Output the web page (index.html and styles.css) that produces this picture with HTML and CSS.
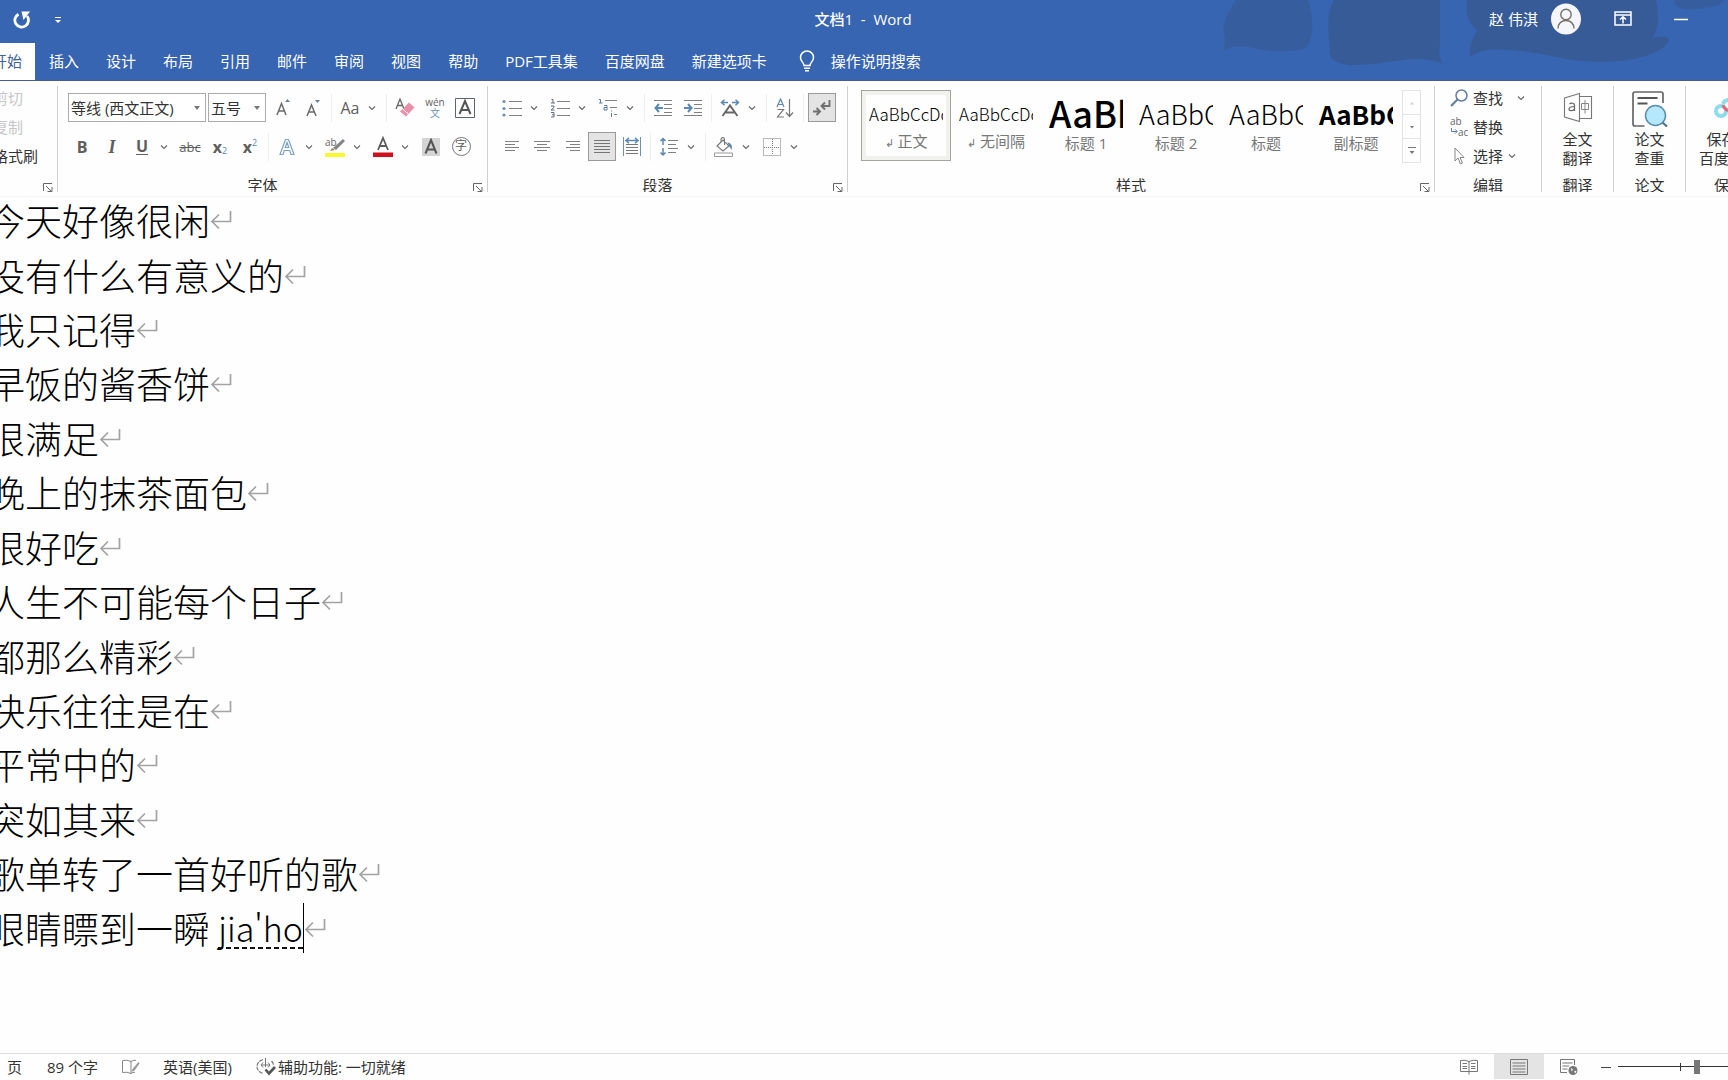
FILE: index.html
```html
<!DOCTYPE html>
<html lang="zh-CN">
<head>
<meta charset="utf-8">
<meta name="viewport" content="width=device-width, initial-scale=1">
<title>文档1 - Word</title>
<link rel="stylesheet" href="styles.css">
</head>
<body>
<svg class="defs" aria-hidden="true">
  <symbol id="chev" viewBox="0 0 8 8"><path d="M1 2.5 4 5.5 7 2.5" fill="none" stroke="#666" stroke-width="1.1"/></symbol>
  <symbol id="ret" viewBox="0 0 22 20"><path d="M20.5 1v10.500H2M9 4.500 2 11.500l7 7" fill="none" stroke="#a3a3a3" stroke-width="1.700"/></symbol>
  <symbol id="launch" viewBox="0 0 10 9"><path d="M.5 8V.5H9M3 3l5 5M9 4v4.500H4.500" fill="none" stroke="#666"/></symbol>
</svg>
<div class="app">
  <header class="head">
    <svg class="clouds" viewBox="0 0 510 70" aria-hidden="true">
      <g fill="#365b97">
        <path opacity=".7" d="M18 0C8 14 4 26 6 34c2 6 0 10 0 17 8-7 22-5 34-2 18 4 34 3 48-1 8-8 8-30 2-48z"/>
        <path d="M116 0c-8 12-6 30-4 50-3 5 4 14 20 15 22 1 46-6 66-6 12 0 18 2 26 4-4-8-2-16-2-24V0z"/>
        <path d="M249 0c-2 14 2 24 10 30-2 6-8 12-7 27 10-8 26-8 40-7 34 2 56 12 90 12 26 0 60-6 68-20 4-6-6-6-16-4 8-10 6-24 4-38z"/>
        <path opacity=".7" d="M456 0c0 8 8 10 20 9 10-1 26-1 30-9z"/>
      </g>
    </svg>
    <div class="titlebar">
      <div class="quick">
        <button class="bare" aria-label="重复"><svg width="18" height="18" viewBox="0 0 18 18"><path d="M5.500 3.200A6.800 6.800 0 1 0 14 5" fill="none" stroke="#fff" stroke-width="2.800"/><path d="M8.500.5h8.500l-6.500 8.500z" fill="#fff"/></svg></button>
        <button class="bare" aria-label="自定义快速访问工具栏"><svg width="8" height="8" viewBox="0 0 8 8"><path d="M1 1.500h6" stroke="#fff"/><path d="M1 4h6L4 7z" fill="#fff"/></svg></button>
      </div>
      <h1 class="title">文档1&nbsp; -&nbsp; Word</h1>
      <div class="account">
        <span class="user">赵 伟淇</span>
        <button class="bare avatar" aria-label="账户"><svg width="30" height="32" viewBox="0 0 30 32"><ellipse cx="15" cy="16" rx="15" ry="15.500" fill="#f4f6fb"/><circle cx="15" cy="11.500" r="5.200" fill="none" stroke="#776f6a" stroke-width="1.400"/><path d="M7 25.500c0-5 3.500-8 8-8s8 3 8 8" fill="none" stroke="#776f6a" stroke-width="1.400"/></svg></button>
        <button class="bare display" aria-label="功能区显示选项"><svg width="18" height="15" viewBox="0 0 18 15"><path d="M1 1h16v13H1zM1 4h16M9 12.500V6M6 8.500 9 5.800l3 2.700" fill="none" stroke="#fff" stroke-width="1.500"/></svg></button>
        <button class="bare" aria-label="最小化"><svg width="14" height="14" viewBox="0 0 14 14"><path d="M0 7.500h14" stroke="#fff" stroke-width="1.500"/></svg></button>
      </div>
    </div>
    <nav class="tabs">
      <button class="tab active">开始</button><button class="tab">插入</button><button class="tab">设计</button><button class="tab">布局</button><button class="tab">引用</button><button class="tab">邮件</button><button class="tab">审阅</button><button class="tab">视图</button><button class="tab">帮助</button><button class="tab">PDF工具集</button><button class="tab">百度网盘</button><button class="tab">新建选项卡</button>
      <label class="tell"><svg width="16" height="22" viewBox="0 0 16 22"><path d="M5 15.500c0-3-3.500-4-3.500-8a6.500 6.500 0 0 1 13 0c0 4-3.500 5-3.500 8zM5 18.200h6M6 20.800h4" fill="none" stroke="#fff" stroke-width="1.500"/></svg><input type="text" placeholder="操作说明搜索" aria-label="操作说明搜索"></label>
    </nav>
  </header>

  <section class="ribbon" aria-label="开始">
    <div class="group clip">
      <div class="body list">
        <button class="cmd off">剪切</button><button class="cmd off">复制</button><button class="cmd">格式刷</button>
      </div>
      <div class="foot"><button class="launch" aria-label="剪贴板设置"><svg width="10" height="9"><use href="#launch"/></svg></button></div>
    </div>

    <div class="group font">
      <div class="body">
        <div class="row">
          <span class="combo name"><select aria-label="字体"><option>等线 (西文正文)</option></select><svg width="6" height="4" viewBox="0 0 6 4"><path d="M0 0h6L3 4z" fill="#777"/></svg></span>
          <span class="combo size"><select aria-label="字号"><option>五号</option></select><svg width="6" height="4" viewBox="0 0 6 4"><path d="M0 0h6L3 4z" fill="#777"/></svg></span>
          <button class="tool" aria-label="增大字号"><svg width="16" height="18" viewBox="0 0 16 18"><path d="M2 16 6.500 4.500 11 16M3.500 12h6" fill="none" stroke="#6b6b6b" stroke-width="1.500"/><path d="M10 3h5l-2.500-3z" fill="#6b7f94"/></svg></button>
          <button class="tool" aria-label="减小字号"><svg width="16" height="18" viewBox="0 0 16 18"><path d="M2 17 6.500 6 11 17M3.500 13h6" fill="none" stroke="#6b6b6b" stroke-width="1.500"/><path d="M10 1h5l-2.500 3z" fill="#6b7f94"/></svg></button>
          <i class="sep"></i>
          <button class="tool split" aria-label="更改大小写"><span class="glyph">Aa</span><svg class="chev"><use href="#chev"/></svg></button>
          <i class="sep"></i>
          <button class="tool" aria-label="清除格式"><svg width="20" height="20" viewBox="0 0 20 20"><path d="M1 11 5 1l4 10M2.500 7.500h5" fill="none" stroke="#666" stroke-width="1.300"/><path d="m14 4.500 5.500 5-8.500 9-6-5z" fill="#ea8fab"/><path d="m7.500 11 6 5" stroke="#fff"/></svg></button>
          <button class="tool pinyin" aria-label="拼音指南"><span>wén</span><b>文</b></button>
          <button class="tool" aria-label="字符边框"><svg width="20" height="20" viewBox="0 0 20 20"><path d="M.5.500h19v19H.5z" fill="none" stroke="#5b6570"/><path d="M4.500 16 10 3l5.500 13M6.500 12h7" fill="none" stroke="#555" stroke-width="2"/></svg></button>
        </div>
        <div class="row">
          <button class="tool"><b class="glyph strong">B</b></button>
          <button class="tool"><em class="glyph ital">I</em></button>
          <button class="tool split"><span class="glyph strong under">U</span><svg class="chev"><use href="#chev"/></svg></button>
          <button class="tool"><s class="strike">abc</s></button>
          <button class="tool"><span class="glyph script">x<sub>2</sub></span></button>
          <button class="tool"><span class="glyph script">x<sup>2</sup></span></button>
          <i class="sep"></i>
          <button class="tool split" aria-label="文本效果"><svg width="16" height="18" viewBox="0 0 16 18"><path d="M1 16.500 6.500 1.500h3L15 16.500h-3l-1.300-4H5.300l-1.300 4zM6.200 9.500h3.600L8 4.500z" fill="#fff" stroke="#7ba3c4" stroke-width="1.200"/></svg><svg class="chev"><use href="#chev"/></svg></button>
          <button class="tool split" aria-label="突出显示"><svg width="22" height="22" viewBox="0 0 22 22"><path d="M1 17h20v4H1z" fill="#fff82b"/><text x="1" y="10" class="mini">ab</text><path d="m19 3 2 2-9 9-3-2z" fill="#858585"/><path d="m8 12 3 2-5 1z" fill="#a5854a"/></svg><svg class="chev"><use href="#chev"/></svg></button>
          <button class="tool split" aria-label="字体颜色"><svg width="20" height="22" viewBox="0 0 20 22"><path d="M5 14 10 2l5 12M6.800 10h6.400" fill="none" stroke="#5c5c5c" stroke-width="1.800"/><path d="M0 16.500h20v4.500H0z" fill="#d0101c"/></svg><svg class="chev"><use href="#chev"/></svg></button>
          <button class="tool" aria-label="字符底纹"><svg width="18" height="18" viewBox="0 0 18 18"><path d="M0 0h18v18H0z" fill="#d4d4d4"/><path d="M3.500 15.500 9 2l5.500 13.500M5.500 11.500h7" fill="none" stroke="#555" stroke-width="2"/></svg></button>
          <button class="tool" aria-label="带圈字符"><span class="ring">字</span></button>
        </div>
      </div>
      <div class="foot"><span>字体</span><button class="launch" aria-label="字体设置"><svg width="10" height="9"><use href="#launch"/></svg></button></div>
    </div>

    <div class="group para">
      <div class="body">
        <div class="row">
          <button class="tool split" aria-label="项目符号"><svg width="20" height="18" viewBox="0 0 20 18"><path d="M7 2.500h13M7 9.500h13M7 16.500h13" stroke="#808080"/><g fill="#6d93b5"><circle cx="2" cy="2.500" r="1.600"/><circle cx="2" cy="9.500" r="1.600"/><circle cx="2" cy="16" r="1.600"/></g></svg><svg class="chev"><use href="#chev"/></svg></button>
          <button class="tool split" aria-label="编号"><svg width="20" height="20" viewBox="0 0 20 20"><path d="M7 3.500h13M7 10.500h13M7 17.500h13" stroke="#808080"/><path d="M1.500 1.500H3V5M1 5h4M1 8h3v1.500L1 12h3.500M1 14.500h3V19H1M2 16.800h2" fill="none" stroke="#5e6b78"/></svg><svg class="chev"><use href="#chev"/></svg></button>
          <button class="tool split" aria-label="多级列表"><svg width="20" height="20" viewBox="0 0 20 20"><path d="M7 2.500h12M12 9.500h7M16 16.500h3" stroke="#808080"/><path d="M1 1.500h1.500V5M1 5h3.500M6 7.500h3V12H6V9.500h3M13.500 12.500v1M13.500 15v4" fill="none" stroke="#5e7f9c"/></svg><svg class="chev"><use href="#chev"/></svg></button>
          <i class="sep"></i>
          <button class="tool" aria-label="减少缩进"><svg width="18" height="18" viewBox="0 0 18 18"><path d="M0 1.500h18M10 5.500h8M10 9.500h8M10 13.500h8M0 16.500h18" stroke="#808080"/><path d="M9 9H2M5 5 1.500 9 5 13" fill="none" stroke="#5b88b0" stroke-width="2"/></svg></button>
          <button class="tool" aria-label="增加缩进"><svg width="18" height="18" viewBox="0 0 18 18"><path d="M0 1.500h18M10 5.500h8M10 9.500h8M10 13.500h8M0 16.500h18" stroke="#808080"/><path d="M0 9h7M4 5l3.500 4L4 13" fill="none" stroke="#5b88b0" stroke-width="2"/></svg></button>
          <i class="sep"></i>
          <button class="tool split" aria-label="中文版式"><svg width="20" height="18" viewBox="0 0 20 18"><path d="M2.500 17 10 6.500 17.500 17M5.500 13.500h9" fill="none" stroke="#666" stroke-width="1.900"/><path d="M8 3.500H1.500M4.500.8 1.500 3.500l3 2.700M12 3.500h6.500M15.500.8l3 2.700-3 2.700" fill="none" stroke="#5b88b0" stroke-width="1.500"/></svg><svg class="chev"><use href="#chev"/></svg></button>
          <i class="sep"></i>
          <button class="tool" aria-label="排序"><svg width="18" height="20" viewBox="0 0 18 20"><path d="M1 9 4.500 1 8 9M2.500 6.500h4" fill="none" stroke="#5b88b0" stroke-width="1.200"/><path d="M1.500 11.500h6l-6 7.500h6.500" fill="none" stroke="#777" stroke-width="1.200"/><path d="M13.500 1v17M10 14.500l3.500 4 3.500-4" fill="none" stroke="#777" stroke-width="1.200"/></svg></button>
          <i class="sep"></i>
          <button class="tool on" aria-label="显示编辑标记" aria-pressed="true"><svg width="20" height="18" viewBox="0 0 20 18"><path d="M17.500 1v6H10M13 3.500 9.500 7l3.500 3.500M1 12.500h6.500M4.500 9 8 12.500 4.500 16" fill="none" stroke="#707070" stroke-width="1.900"/></svg></button>
        </div>
        <div class="row">
          <button class="tool" aria-label="左对齐"><svg width="15" height="11" viewBox="0 0 15 11"><path d="M0 .5h14M0 3.500h10M0 6.500h14M0 9.500h10" stroke="#808080"/></svg></button>
          <button class="tool" aria-label="居中"><svg width="16" height="11" viewBox="0 0 16 11"><path d="M0 .5h16M3 3.500h10M0 6.500h16M3 9.500h10" stroke="#808080"/></svg></button>
          <button class="tool" aria-label="右对齐"><svg width="15" height="11" viewBox="0 0 15 11"><path d="M1 .5h14M5 3.500h10M1 6.500h14M5 9.500h10" stroke="#808080"/></svg></button>
          <button class="tool on" aria-label="两端对齐" aria-pressed="true"><svg width="16" height="15" viewBox="0 0 16 15"><path d="M0 1.500h16M0 4.500h16M0 7.500h16M0 10.500h16M0 13.500h16" stroke="#757575"/></svg></button>
          <button class="tool" aria-label="分散对齐"><svg width="18" height="20" viewBox="0 0 18 20"><path d="M.5 0v19M17.500 0v19" stroke="#7190ab"/><path d="M3 7.500h12M3 10.500h12M3 13.500h12M3 16.500h12" stroke="#777"/><path d="M3 3.500h12M6 .8 3 3.500l3 2.700M12 .8l3 2.700-3 2.700" fill="none" stroke="#5b88b0" stroke-width="1.500"/></svg></button>
          <i class="sep"></i>
          <button class="tool split" aria-label="行距"><svg width="18" height="20" viewBox="0 0 18 20"><path d="M8 3.500h10M8 7.500h8M8 11.500h10M8 15.500h8" stroke="#808080"/><path d="M3 1.500v6.500M.5 4 3 1.500 5.500 4M3 11v7M.5 15.500 3 18l2.500-2.500" fill="none" stroke="#5b88b0" stroke-width="1.500"/></svg><svg class="chev"><use href="#chev"/></svg></button>
          <i class="sep"></i>
          <button class="tool split" aria-label="底纹"><svg width="22" height="20" viewBox="0 0 22 20"><path d="m4 9 6-6 6 6-6 5zM8 6V2.500C8 0 11.500 0 11.500 2.500V8" fill="none" stroke="#777" stroke-width="1.100"/><path d="M14.500 5.500c4 .5 5 3 4 7.500l-2.500-4z" fill="#6688a8"/><path d="M1.500 16h18v3.500h-18z" fill="#fff" stroke="#999"/></svg><svg class="chev"><use href="#chev"/></svg></button>
          <button class="tool split" aria-label="边框"><svg width="18" height="18" viewBox="0 0 18 18"><path d="M.5.500h17v17H.5zM9.500 1v16M1 9.500h16" fill="none" stroke="#777" stroke-dasharray="1 1"/></svg><svg class="chev"><use href="#chev"/></svg></button>
        </div>
      </div>
      <div class="foot"><span>段落</span><button class="launch" aria-label="段落设置"><svg width="10" height="9"><use href="#launch"/></svg></button></div>
    </div>

    <div class="group styles">
      <div class="body gallery">
        <button class="style picked"><span class="demo">AaBbCcDc</span><span class="label"><small>↲</small> 正文</span></button>
        <button class="style"><span class="demo">AaBbCcDc</span><span class="label"><small>↲</small> 无间隔</span></button>
        <button class="style"><span class="demo h1">AaBb</span><span class="label">标题 1</span></button>
        <button class="style"><span class="demo h2">AaBbC</span><span class="label">标题 2</span></button>
        <button class="style"><span class="demo h2">AaBbC</span><span class="label">标题</span></button>
        <button class="style"><span class="demo h2 bold">AaBbC</span><span class="label">副标题</span></button>
        <div class="scroll">
          <button aria-label="上一行"><svg width="6" height="8" viewBox="0 0 6 8"><path d="M1 5.500h4L3 3z" fill="#ccc"/></svg></button>
          <button aria-label="下一行"><svg width="6" height="8" viewBox="0 0 6 8"><path d="M1 3h4L3 5.500z" fill="#777"/></svg></button>
          <button aria-label="其他"><svg width="8" height="8" viewBox="0 0 8 8"><path d="M0 .5h8" stroke="#777"/><path d="M1.500 4h5L4 7z" fill="#777"/></svg></button>
        </div>
      </div>
      <div class="foot"><span>样式</span><button class="launch" aria-label="样式设置"><svg width="10" height="9"><use href="#launch"/></svg></button></div>
    </div>

    <div class="group edit">
      <div class="body list">
        <button class="cmd wide"><svg width="18" height="18" viewBox="0 0 18 18"><circle cx="11.500" cy="6.500" r="5.500" fill="none" stroke="#647f9b" stroke-width="1.500"/><path d="m7.500 10.500-6.500 6.500" stroke="#647f9b" stroke-width="2.200"/></svg><span>查找</span><svg class="chev"><use href="#chev"/></svg></button>
        <button class="cmd"><svg width="18" height="20" viewBox="0 0 18 20"><text x="0" y="8" class="mini">ab</text><text x="8" y="19" class="mini">ac</text><path d="M1.500 11v3.500H7M5 12.300l2.200 2.200L5 16.700" fill="none" stroke="#5b7fb0"/></svg><span>替换</span></button>
        <button class="cmd"><svg width="18" height="18" viewBox="0 0 18 18"><path d="M5 1v13l3-3 2.500 6 2-1L10 10.500h4z" fill="#fff" stroke="#888"/></svg><span>选择</span><svg class="chev"><use href="#chev"/></svg></button>
      </div>
      <div class="foot"><span>编辑</span></div>
    </div>

    <div class="group big">
      <button class="body stack"><svg width="36" height="36" viewBox="0 0 36 36"><path d="m4.500 7 15-4.500v28L4.500 26zM20 5.500h11.500v22H20" fill="none" stroke="#777" stroke-width="1.100"/><path d="M21.500 12.500h7v6h-7zM25 9v13.500" fill="none" stroke="#888"/><path d="M9.500 13c1-1 5-1.500 5 1.500v5.500M14.500 15.500c-3 0-5.500.5-5.500 2.500s4 2.500 5.500 0" fill="none" stroke="#666" stroke-width="1.200"/></svg><span>全文<br>翻译</span></button>
      <div class="foot"><span>翻译</span></div>
    </div>
    <div class="group big">
      <button class="body stack"><svg width="36" height="36" viewBox="0 0 36 36"><path d="M12.500 35H3Q1 35 1 33V3Q1 1 3 1h26q2 0 2 2v9" fill="none" stroke="#666" stroke-width="1.700"/><path d="M5.500 7h20M5.500 12.500h10" stroke="#555" stroke-width="2"/><circle cx="23.500" cy="24.500" r="10" fill="#b5e8fc" stroke="#5a8fae" stroke-width="1.500"/><path d="m30.500 31.500 4.500 4" stroke="#4f7690" stroke-width="2.200"/></svg><span>论文<br>查重</span></button>
      <div class="foot"><span>论文</span></div>
    </div>
    <div class="group big last">
      <button class="body stack"><svg width="36" height="36" viewBox="0 0 36 36"><circle cx="10" cy="20" r="5" fill="none" stroke="#8ddcec" stroke-width="4"/><circle cx="26" cy="20" r="5" fill="none" stroke="#5aa9ee" stroke-width="4"/><path d="M12 13a6.500 6.500 0 0 1 12 0" fill="none" stroke="#8ddcec" stroke-width="4"/><path d="M12 14c1 4 4 6 8 5" fill="none" stroke="#e8657b" stroke-width="3"/></svg><span>保存到<br>百度网盘</span></button>
      <div class="foot"><span>保存</span></div>
    </div>
  </section>

  <main class="doc">
    <p>今天好像很闲<svg class="ret"><use href="#ret"/></svg></p>
    <p>没有什么有意义的<svg class="ret"><use href="#ret"/></svg></p>
    <p>我只记得<svg class="ret"><use href="#ret"/></svg></p>
    <p>早饭的酱香饼<svg class="ret"><use href="#ret"/></svg></p>
    <p>很满足<svg class="ret"><use href="#ret"/></svg></p>
    <p>晚上的抹茶面包<svg class="ret"><use href="#ret"/></svg></p>
    <p>很好吃<svg class="ret"><use href="#ret"/></svg></p>
    <p>人生不可能每个日子<svg class="ret"><use href="#ret"/></svg></p>
    <p>都那么精彩<svg class="ret"><use href="#ret"/></svg></p>
    <p>快乐往往是在<svg class="ret"><use href="#ret"/></svg></p>
    <p>平常中的<svg class="ret"><use href="#ret"/></svg></p>
    <p>突如其来<svg class="ret"><use href="#ret"/></svg></p>
    <p>歌单转了一首好听的歌<svg class="ret"><use href="#ret"/></svg></p>
    <p>眼睛瞟到一瞬&nbsp;<span class="ime">jia'ho</span><i class="caret"></i><svg class="ret"><use href="#ret"/></svg></p>
  </main>

  <footer class="status">
    <span>页</span>
    <span class="words">89 个字</span>
    <button class="bare" aria-label="校对"><svg width="18" height="16" viewBox="0 0 18 16"><path d="M9 14.500V2.500Q5 .5.500 1.500v12Q5 12.500 9 14.500q2-1.500 4-1.200M9 2.500q2-1.500 5-1.200" fill="none" stroke="#888"/><path d="m16.500 3-6 7-1 3 3-1.500 5-7z" fill="#999"/></svg></button>
    <span class="lang">英语(美国)</span>
    <button class="bare access"><svg width="20" height="19" viewBox="0 0 20 19"><path d="M7 2.500C3 4 1 6.500 1 9.500 1 13 4 16 7.500 16.500M15.500 4Q17.500 6 17.500 8.500" fill="none" stroke="#777" stroke-width="1.200" stroke-dasharray="4 1"/><path d="M9.500 1v9M5 8h9M7 5.500 5 8l2 2.500M12 5.500 14 8l-2 2.500" fill="none" stroke="#777"/><path d="m9.500 12.500 3.500 4 6-6.500" fill="none" stroke="#555" stroke-width="2.600"/></svg><span>辅助功能: 一切就绪</span></button>
    <div class="views">
      <button class="view" aria-label="阅读视图"><svg width="18" height="16" viewBox="0 0 18 16"><path d="M9 2.500Q5 .5.500 1.500v11h8.500V2.500q4-2 8.500-1v11H9v3" fill="none" stroke="#777"/><path d="M2.500 4.500H7M2.500 7.500H7M2.500 9.500H7M11 4.500h4.500M11 7.500h4.500M11 9.500h4.500" stroke="#777"/></svg></button>
      <button class="view current" aria-label="页面视图" aria-pressed="true"><svg width="18" height="16" viewBox="0 0 18 16"><path d="M.5.500h17v15H.5zM2.500 4h13M2.500 7h13M2.500 10h13M2.500 13h13" fill="none" stroke="#777"/></svg></button>
      <button class="view" aria-label="Web 版式视图"><svg width="18" height="16" viewBox="0 0 18 16"><path d="M7 13.500H.5V.5h14V6M2.500 4h10M2.500 7H9M2.500 10h5" fill="none" stroke="#777"/><circle cx="13" cy="11.500" r="4.500" fill="#777"/><path d="m11 9 2 1.500-1.500 2zM14 12.500l2.500-1-1 3z" fill="#fff"/></svg></button>
      <button class="bare minus" aria-label="缩小"><svg width="10" height="10" viewBox="0 0 10 10"><path d="M0 5.500h10" stroke="#444"/></svg></button>
      <input class="zoom" type="range" min="0" max="100" value="64" aria-label="缩放">
    </div>
  </footer>
</div>
</body>
</html>
```
FILE: styles.css
```css
* { box-sizing: border-box; }
body {
  margin: 0;
  background: #fefefe;
  color: #333;
  font: 15px/20px "Open Sans", "Noto Sans CJK SC", sans-serif;
}
button, input, select { font: inherit; color: inherit; margin: 0; }
button { padding: 0; border: 0; background: none; }
svg { flex: none; display: block; }
.defs { position: absolute; width: 0; height: 0; }
.app { display: flex; flex-direction: column; min-height: 100vh; overflow: hidden; }

/* title bar and tabs */
.head {
  position: relative;
  background: #3865b1;
  border-bottom: 1px solid #465f8d;
  color: #fff;
}
.clouds { position: absolute; top: 0; right: 0; width: 510px; height: 70px; }
.titlebar {
  position: relative;
  display: grid;
  grid-template-columns: 1fr auto 1fr;
  align-items: center;
  height: 43px;
  padding-bottom: 6px;
}
.bare { display: flex; align-items: center; }
.quick { display: flex; align-items: center; gap: 23px; padding: 2px 0 0 13px; }
.title { margin: 0; padding-right: 2px; font-size: 15px; font-weight: 500; }
.account { display: flex; align-items: center; justify-content: flex-end; padding-right: 40px; }
.avatar { margin: 0 33px 0 13px; }
.display { margin-right: 42px; }
.tabs { position: relative; display: flex; gap: 1px; height: 37px; margin-left: -21px; }
.tab { padding: 0 13px 2px; flex: none; }
.tab.active { background: #fff; color: #41619b; }
.tell { display: flex; align-items: center; gap: 16px; padding: 0 0 1px 18px; }
.tell input { width: 160px; padding: 0 0 1px; border: 0; background: none; outline: 0; }
.tell input::placeholder { color: #fff; opacity: 1; }

/* ribbon */
.ribbon { display: flex; height: 116px; padding: 5px 0 4px; margin-left: -8px; border-bottom: 1px solid #f7f7f7; background: #fefefe; }
.group { display: flex; flex: none; flex-direction: column; justify-content: space-between; border-right: 1px solid #cfcfcf; }
.body { padding-top: 7px; }
.foot { position: relative; display: flex; justify-content: center; height: 15px; overflow: hidden; line-height: 17px; }
.font .foot, .para .foot, .styles .foot { padding-right: 20px; }
.launch { position: absolute; right: 4px; top: 6px; }
.row { display: flex; align-items: center; height: 29px; margin-bottom: 10px; }
.row + .row { margin-bottom: 0; }
.clip { width: 66px; }
.font { width: 430px; }
.font .body, .para .body { padding-left: 9px; }
.font .row:first-child { padding-left: 1px; }
.para { width: 360px; }
.styles { width: 587px; }
.edit { width: 107px; }
.big { width: 72px; }
.big.last { width: 86px; border-right: 0; }

.list { display: flex; flex-direction: column; padding-top: 0; }
.cmd { display: flex; align-items: center; gap: 5px; height: 29px; padding: 0 0 5px 1px; white-space: nowrap; }
.cmd.off { color: #c6c6c6; }
.edit .cmd { padding-left: 15px; }
.wide .chev { margin-left: 9px; }
.chev { width: 8px; height: 8px; }

.combo { position: relative; display: flex; align-items: center; height: 29px; margin-right: 2px; }
.combo select { appearance: none; width: 100%; height: 100%; padding: 0 2px; border: 1px solid #ababab; border-radius: 0; background: #fff; }
.combo svg { position: absolute; right: 6px; pointer-events: none; }
.name { width: 138px; }
.size { width: 58px; }

.tool { display: flex; flex: none; align-items: center; justify-content: center; width: 30px; height: 29px; color: #5f5f5f; }
.tool.split { display: grid; grid-template-columns: 30px 14px; place-items: center; width: 48px; justify-content: start; }
.tool.on { border: 1px solid #9a9a9a; background: #e4e4e4; width: 28px; margin: 0 1px; }
.sep { width: 1px; height: 28px; margin: 0 3px; background: #eee; flex: none; }
.glyph { font-size: 16px; line-height: 20px; }
.strong { font-weight: 700; }
.ital { font: italic bold 18px/20px "Liberation Serif", serif; }
.under { border-bottom: 1px solid #5f5f5f; line-height: 16px; }
.strike { font-size: 13px; }
.script { display: flex; font-weight: 700; }
.script sub, .script sup { font-size: 9px; font-weight: 400; line-height: 12px; color: #5b88b0; }
.script sub { align-self: flex-end; }
.script sup { align-self: flex-start; }
.pinyin { flex-direction: column; font-size: 10px; line-height: 10px; }
.pinyin b { color: #6d93b5; font-weight: 400; line-height: 12px; }
.ring { width: 19px; height: 19px; border: 1px solid #777; border-radius: 50%; font-size: 12px; line-height: 16px; }
.mini { font-size: 10px; fill: #666; }

.gallery { display: flex; padding: 4px 0 0 13px; }
.style { display: flex; flex-direction: column; width: 90px; height: 71px; padding: 7px; border: 1px solid transparent; }
.picked { border-color: #a5a49f; box-shadow: inset 0 0 0 4px #f1f1ee; }
.demo { width: 74px; height: 36px; overflow: hidden; text-align: left; white-space: nowrap; color: #000; font: 300 17px/32px "Noto Sans CJK SC", sans-serif; }
.demo.h1 { font-size: 36px; font-weight: 500; line-height: 28px; }
.demo.h2 { font-size: 27px; line-height: 32px; }
.demo.bold { font-size: 26px; font-weight: 700; }
.label { width: 100%; color: #777; }
.label small { font-size: 11px; }
.scroll { display: flex; flex-direction: column; width: 19px; height: 73px; margin-left: 1px; border: 1px solid #e3e3e3; }
.scroll button { display: grid; flex: 1; place-items: center; }
.scroll button + button { border-top: 1px solid #e3e3e3; }

.stack { display: flex; flex-direction: column; align-items: center; gap: 3px; padding-top: 5px; line-height: 19px; }

/* document */
.doc {
  display: grid;
  flex: 1;
  grid-auto-rows: 1fr;
  padding-bottom: 98px;
  margin: -4px 0 0 -12px;
  color: #000;
  font: 300 37px/54px "Noto Sans CJK SC", sans-serif;
}
.doc p { display: flex; align-items: center; margin: 0; white-space: nowrap; }
.ret { width: 22px; height: 20px; }
.ime { font-size: 34px; background: repeating-linear-gradient(90deg, #111 0 5px, transparent 5px 8px) left 0 bottom 6px / 100% 2px no-repeat; }
.caret { width: 1px; height: 50px; background: #000; }

/* status bar */
.status { display: flex; align-items: center; height: 27px; padding: 0 0 1px 7px; border-top: 1px solid #dedede; white-space: nowrap; }
.words { margin: 0 24px 0 25px; }
.lang { margin: 0 24px 0 23px; }
.access { gap: 2px; }
.views { display: flex; align-items: center; height: 100%; margin: 0 -14px 0 auto; }
.view { display: grid; place-items: center; width: 50px; height: 100%; }
.current { background: #e4e4e4; }
.minus { margin: 0 7px; }
.zoom {
  appearance: none;
  width: 124px;
  height: 16px;
  background:
    linear-gradient(#333, #333) center / 1px 8px no-repeat,
    linear-gradient(#333, #333) center / 100% 1px no-repeat;
}
.zoom::-webkit-slider-thumb { appearance: none; width: 6px; height: 14px; background: #777; }
```
